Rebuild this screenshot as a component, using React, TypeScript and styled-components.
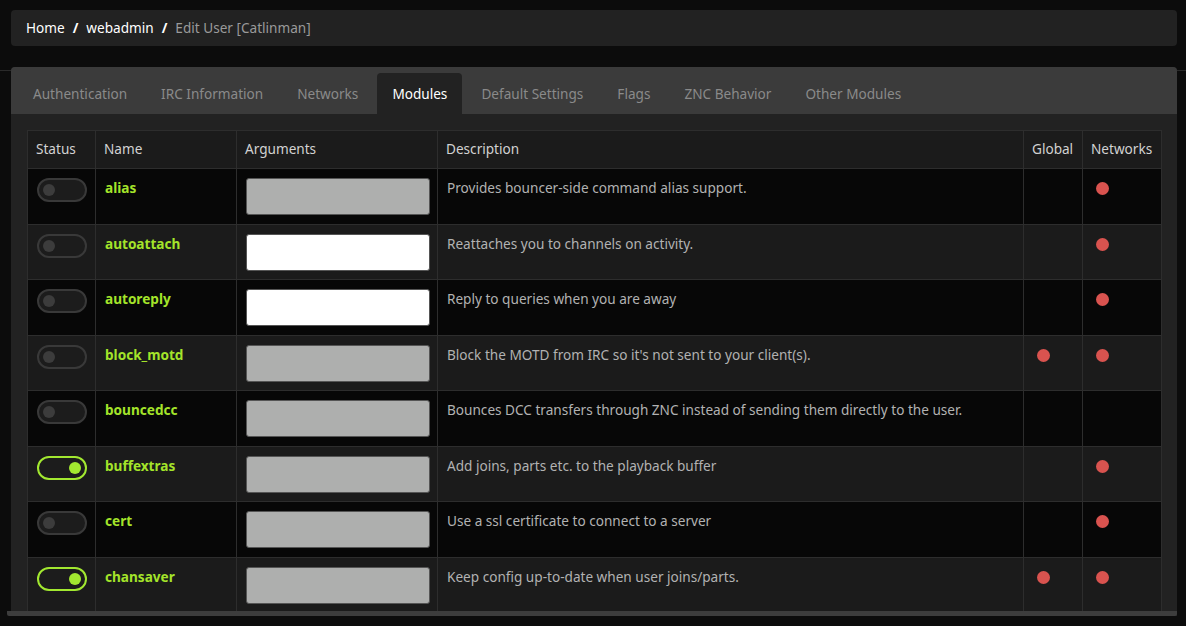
import React from "react";
import styled, { createGlobalStyle } from "styled-components";

const Global = createGlobalStyle`
  html, body { margin: 0; padding: 0; background: #0c0c0c; }
  body { font-family: "Noto Sans", "Open Sans", sans-serif; font-size: 13.6px; color: #cfcfcf; overflow: hidden; }
  * { box-sizing: border-box; }
`;

const Page = styled.div`
  width: 1186px;
  height: 626px;
  padding: 10px 9px 0 11px;
  overflow: hidden;
`;

const Breadcrumb = styled.nav`
  height: 36px;
  background: #222222;
  border-radius: 4px;
  padding: 0 15px;
  display: flex;
  align-items: center;
  line-height: 20px;
`;

const Crumb = styled.span<{ $active?: boolean }>`
  color: ${(p) => (p.$active ? "#9a9a9a" : "#ffffff")};
`;

const Sep = styled.span`
  color: #ffffff;
  font-weight: 700;
  padding: 0 8px;
`;

const Divider = styled.div`
  margin: 24px -9px 0 -11px;
  border-top: 1px solid #2a2a2a;
`;

const Panel = styled.section`
  margin-top: -4px;
  width: 1166px;
  background: #222222;
  border-radius: 4px 4px 0 0;
`;

const TabBar = styled.ul`
  list-style: none;
  margin: 0;
  height: 47px;
  padding: 6px 0 0 7px;
  background: #3b3b3b;
  border-radius: 4px 4px 0 0;
  display: flex;
  gap: 4px;
`;

const Tab = styled.li<{ $active?: boolean }>`
  height: 41px;
  padding: 0 15px;
  display: flex;
  align-items: center;
  border-radius: 4px 4px 0 0;
  background: ${(p) => (p.$active ? "#222222" : "transparent")};
  color: ${(p) => (p.$active ? "#ffffff" : "#8a8a8a")};
  line-height: 20px;
`;

const Body = styled.div`
  height: 497px;
  padding: 16px 16px 0;
  overflow: hidden;
`;

const BottomBar = styled.div`
  height: 5px;
  margin-left: -4px;
  width: 1170px;
  background: #3d3d3d;
  border-radius: 0 0 2px 2px;
`;

const Table = styled.table`
  width: 1134px;
  table-layout: fixed;
  border-collapse: collapse;
  border: 1px solid #2d2d2d;
`;

const Th = styled.th`
  background: #1b1b1b;
  border: 1px solid #2d2d2d;
  text-align: left;
  font-weight: 400;
  color: #d2d2d2;
  padding: 8px 8px 9px;
  line-height: 20px;
  height: 38px;
`;

const Tr = styled.tr<{ $dark: boolean }>`
  background: ${(p) => (p.$dark ? "#070707" : "#1b1b1b")};
`;

const Td = styled.td`
  border: 1px solid #2d2d2d;
  padding: 9px 8px 8.5px 9px;
  vertical-align: top;
  line-height: 20px;
  color: #b2b2b2;
`;

const Toggle = styled.span<{ $on: boolean }>`
  display: flex;
  align-items: center;
  justify-content: ${(p) => (p.$on ? "flex-end" : "flex-start")};
  width: 50px;
  height: 24px;
  border-radius: 12px;
  border: 2px solid ${(p) => (p.$on ? "#a2e830" : "#393939")};
  background: #1c1c1c;
  padding: 0 4px;
`;

const Knob = styled.span<{ $on: boolean }>`
  width: 12px;
  height: 12px;
  border-radius: 50%;
  background: ${(p) => (p.$on ? "#a2e830" : "#3c3c3c")};
`;

const Name = styled.span`
  color: #a4e42a;
  font-weight: 700;
`;

const ArgInput = styled.input<{ $white: boolean }>`
  display: block;
  width: 184px;
  height: 37px;
  margin: 0;
  border: 1px solid #555;
  border-radius: 3px;
  background: ${(p) => (p.$white ? "#ffffff" : "#aeafae")};
  outline: none;
`;

const Dot = styled.span`
  display: block;
  width: 13px;
  height: 13px;
  margin: 4px 0 0 4px;
  border-radius: 50%;
  background: #d9534f;
`;

type Mod = {
  name: string;
  on: boolean;
  white: boolean;
  desc: string;
  global: boolean;
  net: boolean;
};

const modules: Mod[] = [
  { name: "alias", on: false, white: false, desc: "Provides bouncer-side command alias support.", global: false, net: true },
  { name: "autoattach", on: false, white: true, desc: "Reattaches you to channels on activity.", global: false, net: true },
  { name: "autoreply", on: false, white: true, desc: "Reply to queries when you are away", global: false, net: true },
  { name: "block_motd", on: false, white: false, desc: "Block the MOTD from IRC so it's not sent to your client(s).", global: true, net: true },
  { name: "bouncedcc", on: false, white: false, desc: "Bounces DCC transfers through ZNC instead of sending them directly to the user.", global: false, net: false },
  { name: "buffextras", on: true, white: false, desc: "Add joins, parts etc. to the playback buffer", global: false, net: true },
  { name: "cert", on: false, white: false, desc: "Use a ssl certificate to connect to a server", global: false, net: true },
  { name: "chansaver", on: true, white: false, desc: "Keep config up-to-date when user joins/parts.", global: true, net: true },
];

const tabs = [
  "Authentication",
  "IRC Information",
  "Networks",
  "Modules",
  "Default Settings",
  "Flags",
  "ZNC Behavior",
  "Other Modules",
];

export default function App() {
  return (
    <>
      <Global />
      <Page>
        <Breadcrumb>
          <Crumb>Home</Crumb>
          <Sep>/</Sep>
          <Crumb>webadmin</Crumb>
          <Sep>/</Sep>
          <Crumb $active>Edit User [Catlinman]</Crumb>
        </Breadcrumb>
        <Divider />
        <Panel>
          <TabBar>
            {tabs.map((t) => (
              <Tab key={t} $active={t === "Modules"}>
                {t}
              </Tab>
            ))}
          </TabBar>
          <Body>
            <Table>
              <colgroup>
                <col style={{ width: 68 }} />
                <col style={{ width: 141 }} />
                <col style={{ width: 201 }} />
                <col style={{ width: 586 }} />
                <col style={{ width: 59 }} />
                <col style={{ width: 79 }} />
              </colgroup>
              <thead>
                <tr>
                  <Th>Status</Th>
                  <Th>Name</Th>
                  <Th>Arguments</Th>
                  <Th>Description</Th>
                  <Th>Global</Th>
                  <Th>Networks</Th>
                </tr>
              </thead>
              <tbody>
                {modules.map((m, i) => (
                  <Tr key={m.name} $dark={i % 2 === 0}>
                    <Td>
                      <Toggle $on={m.on}>
                        <Knob $on={m.on} />
                      </Toggle>
                    </Td>
                    <Td>
                      <Name>{m.name}</Name>
                    </Td>
                    <Td>
                      <ArgInput $white={m.white} />
                    </Td>
                    <Td>{m.desc}</Td>
                    <Td>{m.global && <Dot />}</Td>
                    <Td>{m.net && <Dot />}</Td>
                  </Tr>
                ))}
              </tbody>
            </Table>
          </Body>
          <BottomBar />
        </Panel>
      </Page>
    </>
  );
}
